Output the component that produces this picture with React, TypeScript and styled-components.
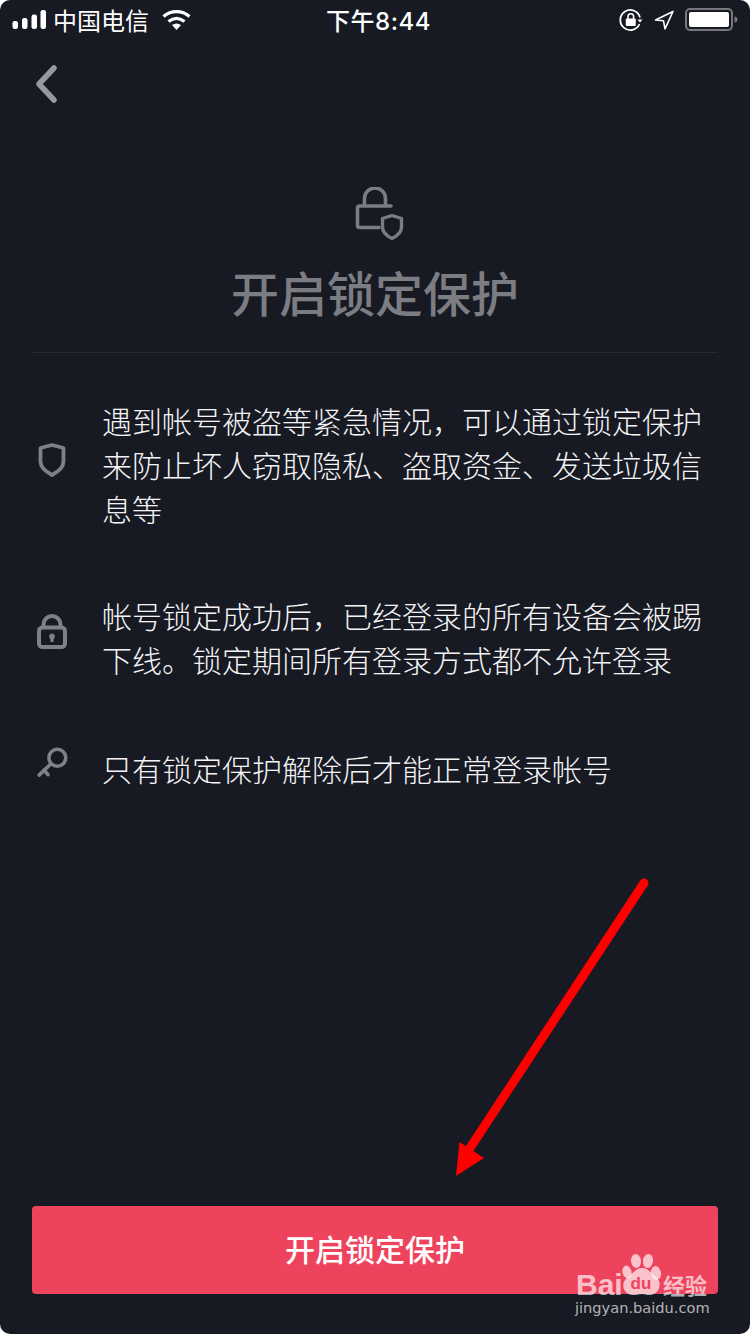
import React from "react";
import styled, { createGlobalStyle } from "styled-components";

const Global = createGlobalStyle`
  html, body { margin: 0; padding: 0; background: #fff; }
  #root { width: 750px; height: 1334px; }
`;

const FONT = `"Noto Sans CJK SC", "Inter", "Liberation Sans", sans-serif`;

const Page = styled.div`
  position: relative;
  width: 750px;
  height: 1334px;
  overflow: hidden;
  background: #171a23;
  border-radius: 10px;
  display: flex;
  flex-direction: column;
  font-family: ${FONT};
  color: #e9e9eb;
`;

const StatusBar = styled.div`
  height: 40px;
  padding: 0 11px 0 12px;
  display: grid;
  grid-template-columns: 1fr auto 1fr;
  align-items: center;
  color: #fff;
`;
const StatusLeft = styled.div`
  display: flex;
  align-items: center;
  gap: 5px;
`;
const Carrier = styled.span`
  font-size: 24px;
  line-height: 30px;
  font-weight: 400;
  margin-right: 8px;
`;
const Clock = styled.span`
  font-family: "Inter", "Noto Sans CJK SC", sans-serif;
  font-size: 24px;
  line-height: 30px;
  font-weight: 500;
  letter-spacing: 0.5px;
  margin: 3px 0 0 6px;
`;
const StatusRight = styled.div`
  display: flex;
  align-items: center;
  justify-content: flex-end;
  gap: 11px;
`;

const NavBar = styled.div`
  height: 88px;
  padding-left: 34px;
  display: flex;
  align-items: center;
`;

const Hero = styled.div`
  margin-top: 59px;
  display: flex;
  flex-direction: column;
  align-items: center;
`;
const HeroSvg = styled.svg`
  margin-left: 10px;
`;
const Title = styled.h1`
  margin: 15px 0 0;
  font-size: 48px;
  line-height: 70px;
  font-weight: 500;
  color: #7c7d82;
`;
const Divider = styled.div`
  margin: 26px 32px 0;
  height: 1px;
  background: #272a32;
`;

const List = styled.div`
  margin-top: 45px;
  padding: 0 32px 0 36px;
  display: flex;
  flex-direction: column;
`;
const Item = styled.div<{ $gap: number }>`
  display: grid;
  grid-template-columns: 32px 1fr;
  column-gap: 34px;
  align-items: center;
  margin-bottom: ${(p) => p.$gap}px;
`;
const IconSlot = styled.div<{ $lift: number }>`
  display: flex;
  justify-content: center;
  margin-bottom: ${(p) => p.$lift}px;
`;
const ItemText = styled.p`
  margin: 0;
  font-size: 30px;
  line-height: 44px;
  font-weight: 300;
  color: #f4f4f6;
  white-space: pre-line;
`;

const Footer = styled.div`
  margin-top: auto;
  padding: 0 32px 40px;
`;
const Primary = styled.button`
  display: block;
  width: 100%;
  height: 88px;
  border: 0;
  border-radius: 4px;
  background: #ee435c;
  color: #fff;
  font-family: ${FONT};
  font-size: 30px;
  font-weight: 500;
  padding: 0 0 4px;
`;

const Arrow = styled.svg`
  position: absolute;
  left: 430px;
  top: 870px;
`;

const Watermark = styled.div`
  position: absolute;
  left: 574px;
  top: 1252px;
  width: 140px;
  height: 68px;
  color: rgba(255, 255, 255, 0.68);
`;
const Paw = styled.svg`
  position: absolute;
  left: 0;
  top: 0;
`;
const WmBai = styled.span`
  position: absolute;
  left: 2px;
  top: 17px;
  font-family: "Liberation Sans", sans-serif;
  font-size: 30px;
  line-height: 32px;
  font-weight: 700;
`;
const WmDu = styled.span`
  position: absolute;
  left: 54px;
  top: 22px;
  width: 26px;
  text-align: center;
  font-family: "Liberation Sans", sans-serif;
  font-size: 17px;
  line-height: 20px;
  font-weight: 700;
  color: #ee435c;
`;
const WmCn = styled.span`
  position: absolute;
  left: 89px;
  top: 19px;
  font-size: 22px;
  line-height: 26px;
  font-weight: 700;
  white-space: nowrap;
`;
const WmUrl = styled.span`
  position: absolute;
  left: 1px;
  top: 46px;
  font-family: "DejaVu Sans", sans-serif;
  font-size: 14.6px;
  line-height: 20px;
  color: rgba(255, 255, 255, 0.68);
  white-space: nowrap;
`;

const Signal = () => (
  <svg width="36" height="20" viewBox="0 0 36 20">
    <rect x="0.5" y="11" width="5.5" height="8" rx="2.2" fill="#fff" />
    <rect x="10" y="8" width="5.5" height="11" rx="2.2" fill="#fff" />
    <rect x="19.5" y="4.5" width="5.5" height="14.5" rx="2.2" fill="#fff" />
    <rect x="28.5" y="0" width="5.5" height="19" rx="2.2" fill="#fff" />
  </svg>
);
const Wifi = () => (
  <svg width="30" height="22" viewBox="0 0 30 22">
    <path d="M1.5 7.5C9 1 20 1 27.5 7.5" fill="none" stroke="#fff" strokeWidth="3.2" />
    <path d="M6.5 12.5C11.5 8.5 17.5 8.5 22.5 12.5" fill="none" stroke="#fff" strokeWidth="3.2" />
    <path d="M10 16C13 14 16 14 19 16L14.5 21Z" fill="#fff" />
  </svg>
);
const RotationLock = () => (
  <svg width="24" height="24" viewBox="0 0 24 24">
    <path d="M21 9.5A10 10 0 1 0 20.5 16" fill="none" stroke="#fff" strokeWidth="1.8" />
    <path d="M18.5 11.5h5L21 14.5Z" fill="#fff" />
    <rect x="6.8" y="10.5" width="10" height="7.5" rx="1" fill="#fff" />
    <path d="M9 11V8.6a2.8 2.8 0 0 1 5.6 0V11" fill="none" stroke="#fff" strokeWidth="1.6" />
  </svg>
);
const Location = () => (
  <svg width="20" height="20" viewBox="0 0 20 20">
    <path d="M19 1.5 1.5 10l8 .8 1.5 8Z" fill="none" stroke="#fff" strokeWidth="1.6" strokeLinejoin="round" />
  </svg>
);
const Battery = () => (
  <svg width="54" height="24" viewBox="0 0 54 24">
    <rect x="1" y="1" width="46" height="21" rx="4" fill="none" stroke="#77787d" strokeWidth="2" />
    <rect x="4" y="4" width="40" height="15" rx="2" fill="#fff" />
    <path d="M49.5 8.5c2 .3 3 1.4 3 3s-1 2.7-3 3Z" fill="#77787d" />
  </svg>
);
const Back = () => (
  <svg width="24" height="38" viewBox="0 0 24 38">
    <path d="M20 3 5 19l15 16" fill="none" stroke="#98999c" strokeWidth="5.5" strokeLinecap="round" strokeLinejoin="round" />
  </svg>
);
const HeroIcon = () => (
  <HeroSvg width="50" height="54" viewBox="0 0 50 54">
    <path d="M36 19H4.5a2 2 0 0 0-2 2v17.500a2 2 0 0 0 2 2H24" fill="none" stroke="#7c7d82" strokeWidth="3.600" strokeLinecap="round" />
    <path d="M9.500 18V11.500a10 10 0 0 1 21 0V18" fill="none" stroke="#7c7d82" strokeWidth="3.600" />
    <path d="M37 28.500 46.500 31.500V40c0 5-4 8.800-9.500 11.500C31.500 48.800 27.500 45 27.500 40V31.500Z" fill="none" stroke="#7c7d82" strokeWidth="3.400" strokeLinejoin="round" />
  </HeroSvg>
);
const ShieldIcon = () => (
  <svg width="32" height="36" viewBox="0 0 32 36">
    <path d="M16 3 27.500 6V19.500C27.500 25 22.500 29.500 16 33 9.500 29.500 4.500 25 4.500 19.500V6Z" fill="none" stroke="#808186" strokeWidth="3.800" strokeLinejoin="round" />
  </svg>
);
const LockIcon = () => (
  <svg width="32" height="38" viewBox="0 0 32 38">
    <rect x="3" y="14.500" width="26" height="19.500" rx="3.500" fill="none" stroke="#808186" strokeWidth="4" />
    <path d="M7.500 14V11.500a8.500 8.500 0 0 1 17 0V14" fill="none" stroke="#808186" strokeWidth="4" />
    <path d="M16 20.500a3 3 0 0 1 1.700 5.400L17.500 29h-3l-.2-3.100A3 3 0 0 1 16 20.500Z" fill="#808186" />
  </svg>
);
const KeyIcon = () => (
  <svg width="36" height="36" viewBox="0 0 36 36">
    <circle cx="24" cy="11" r="9.500" fill="none" stroke="#808186" strokeWidth="4" />
    <path d="M16 18.500 3.500 30.500" fill="none" stroke="#808186" strokeWidth="4" strokeLinecap="round" />
    <path d="M9 25 13.500 30" fill="none" stroke="#808186" strokeWidth="4" strokeLinecap="round" />
  </svg>
);

export default function App() {
  return (
    <Page>
      <Global />
      <StatusBar>
        <StatusLeft>
          <Signal />
          <Carrier>中国电信</Carrier>
          <Wifi />
        </StatusLeft>
        <Clock>下午8:44</Clock>
        <StatusRight>
          <RotationLock />
          <Location />
          <Battery />
        </StatusRight>
      </StatusBar>
      <NavBar>
        <Back />
      </NavBar>
      <Hero>
        <HeroIcon />
        <Title>开启锁定保护</Title>
      </Hero>
      <Divider />
      <List>
        <Item $gap={63}>
          <IconSlot $lift={8}><ShieldIcon /></IconSlot>
          <ItemText>{"遇到帐号被盗等紧急情况，可以通过锁定保护\n来防止坏人窃取隐私、盗取资金、发送垃圾信\n息等"}</ItemText>
        </Item>
        <Item $gap={65}>
          <IconSlot $lift={10}><LockIcon /></IconSlot>
          <ItemText>{"帐号锁定成功后，已经登录的所有设备会被踢\n下线。锁定期间所有登录方式都不允许登录"}</ItemText>
        </Item>
        <Item $gap={0}>
          <IconSlot $lift={8}><KeyIcon /></IconSlot>
          <ItemText>只有锁定保护解除后才能正常登录帐号</ItemText>
        </Item>
      </List>
      <Footer>
        <Primary>开启锁定保护</Primary>
      </Footer>
      <Arrow width="240" height="320" viewBox="0 0 240 320">
        <path d="M214 13 40 278" fill="none" stroke="#fe0000" strokeWidth="9" strokeLinecap="round" />
        <path d="M26 306 29.500 272 54 288Z" fill="#fe0000" />
      </Arrow>
      <Watermark>
        <Paw width="140" height="50" viewBox="0 0 140 50">
          <g fill="currentColor">
            <ellipse cx="62" cy="9" rx="5" ry="7" transform="rotate(-6 62 9)" />
            <ellipse cx="74" cy="9" rx="5" ry="7" transform="rotate(8 74 9)" />
            <ellipse cx="53" cy="20" rx="4.500" ry="6.500" transform="rotate(-15 53 20)" />
            <ellipse cx="82" cy="21" rx="5" ry="7" transform="rotate(-12 82 21)" />
            <path d="M68 16c7 0 9 6 14 9 6 4 5 16-5 18-4 .5-6-1-9-1s-6 1.500-10 1c-10-1.500-11-13-5-17 5-3 8-10 15-10Z" />
          </g>
        </Paw>
        <WmBai>Bai</WmBai>
        <WmDu>du</WmDu>
        <WmCn>经验</WmCn>
        <WmUrl>jingyan.baidu.com</WmUrl>
      </Watermark>
    </Page>
  );
}
